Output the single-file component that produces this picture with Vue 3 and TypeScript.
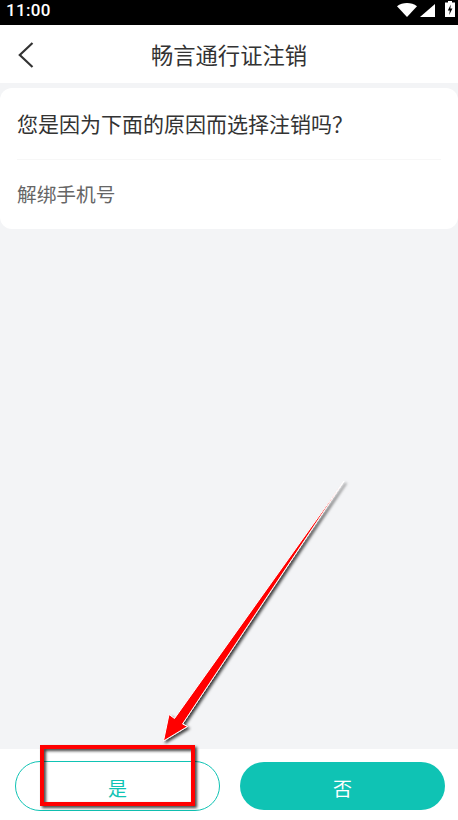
<template>
  <div class="page">
    <div class="status-bar">
      <span class="time">11:00</span>
      <div class="status-icons">
        <svg width="20" height="14" viewBox="0 0 20 14"><path d="M0 3.200C5.500-1 14.500-1 20 3.200L10 14z" fill="#fff" /></svg>
        <svg class="signal" width="15" height="13" viewBox="0 0 15 13"><path d="M15 0V13H0z" fill="#fff" /></svg>
        <svg class="battery" width="10" height="16" viewBox="0 0 10 16">
          <path d="M3 0H7V1.500H10V16H0V1.500H3z" fill="#fff" />
          <path d="M5.800 3.500L2.800 9.500H4.800L4.200 14L7.400 7.500H5.300z" fill="#000" />
        </svg>
      </div>
    </div>

    <header class="nav">
      <svg class="back" width="16" height="26" viewBox="0 0 16 26">
        <path d="M14.500 1L1.800 13L14.500 25" fill="none" stroke="#333" stroke-width="2.200" />
      </svg>
      <h1 class="title">畅言通行证注销</h1>
    </header>

    <main class="content">
      <section class="card">
        <div class="question">您是因为下面的原因而选择注销吗？</div>
        <div class="reason">解绑手机号</div>
      </section>
    </main>

    <footer class="actions">
      <button class="btn btn-outline">是</button>
      <button class="btn btn-solid">否</button>
    </footer>

    <!-- screenshot annotation drawn on top of the page -->
    <svg class="annotation" width="458" height="820" viewBox="0 0 458 820">
      <defs>
        <filter id="shadow" x="-20%" y="-20%" width="140%" height="140%">
          <feDropShadow dx="2" dy="2" stdDeviation="1.500" flood-color="#000" flood-opacity="0.75" />
        </filter>
      </defs>
      <path
        d="M344 481L182.500 724L187.500 726.500L163.500 741L169 714.500L174.500 718.500L344 481z"
        fill="#f00"
        stroke="#fff"
        stroke-width="1"
        stroke-linejoin="round"
        filter="url(#shadow)"
      />
      <rect x="42" y="747" width="151" height="57" fill="none" stroke="#f00" stroke-width="4" filter="url(#shadow)" />
    </svg>
  </div>
</template>

<script setup lang="ts">
</script>

<style>
html,
body {
  margin: 0;
  padding: 0;
}
</style>

<style scoped>
.page {
  position: relative;
  width: 458px;
  height: 820px;
  display: flex;
  flex-direction: column;
  overflow: hidden;
  background: #f3f4f6;
  font-family: "Roboto", "Noto Sans CJK SC", sans-serif;
}

.status-bar {
  height: 25px;
  flex: none;
  box-sizing: border-box;
  display: flex;
  align-items: flex-start;
  justify-content: space-between;
  padding: 0 3px 0 6px;
  background: #000;
  color: #fff;
}

.time {
  font-size: 17px;
  line-height: 20px;
  font-weight: 500;
  letter-spacing: 0.3px;
}

.status-icons {
  display: flex;
  align-items: flex-end;
  height: 17px;
  gap: 3px;
}

.battery {
  margin-left: 7px;
}

.nav {
  height: 58px;
  flex: none;
  display: flex;
  align-items: center;
  justify-content: center;
  position: relative;
  background: #fff;
}

.back {
  position: absolute;
  left: 18px;
  top: 17px;
}

.title {
  margin: 0;
  font-size: 22.300px;
  font-weight: 400;
  color: #333;
}

.content {
  flex: 1;
  padding-top: 5px;
}

.card {
  height: 141px;
  box-sizing: border-box;
  padding: 0 17px;
  border-radius: 12px;
  background: #fff;
}

.question {
  height: 72px;
  box-sizing: border-box;
  padding-top: 20px;
  font-size: 21px;
  line-height: 34px;
  color: #333;
  border-bottom: 1px solid #f7f7f7;
}

.reason {
  padding-top: 21px;
  font-size: 19.700px;
  line-height: 30px;
  color: #666;
}

.actions {
  height: 71px;
  flex: none;
  display: flex;
  justify-content: space-between;
  box-sizing: border-box;
  padding: 12px 13px 0 15px;
  background: #fff;
}

.btn {
  width: 205px;
  height: 50px;
  box-sizing: border-box;
  padding: 2px 0 0;
  border-radius: 25px;
  font-family: inherit;
  font-size: 19px;
}

.btn-outline {
  border: 1px solid #0fc3b4;
  background: #fff;
  color: #0fc3b4;
}

.btn-solid {
  margin-top: 1px;
  height: 48px;
  border: none;
  background: #0fc3b4;
  color: #fff;
}

.annotation {
  position: absolute;
  left: 0;
  top: 0;
  pointer-events: none;
}
</style>
